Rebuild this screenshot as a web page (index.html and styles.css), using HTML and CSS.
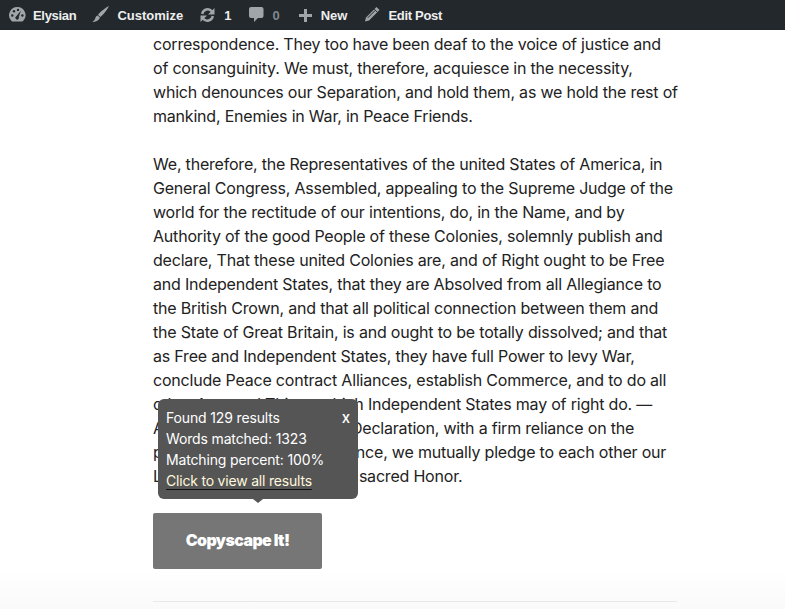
FILE: index.html
```html
<!DOCTYPE html>
<html lang="en">
    <head>
        <meta charset="utf-8">
        <title>Elysian</title>
        <link rel="stylesheet" href="styles.css">
    </head>
    <body>
        <div class="adminbar">
            <a class="bar-item">
                <svg class="icon" viewBox="0 0 20 20">
                    <path d="M9.300 2a8.200 8.200 0 0 0-6 13.800c.3.400.8.600 1.300.600h9.400c.5 0 1-.2 1.300-.6A8.200 8.200 0 0 0 9.300 2z"/>
                    <g class="cut">
                        <circle cx="4.300" cy="10.500" r="1.200"/>
                        <circle cx="6" cy="6.300" r="1.200"/>
                        <circle cx="10" cy="4.900" r="1.200"/>
                        <circle cx="14.400" cy="10.500" r="1.200"/>
                        <path d="M12.800 5.800l-2 6.300a1.800 1.800 0 1 1-2.500-.9z"/>
                    </g>
                </svg>
                <span class="w-site">Elysian</span>
            </a>
            <a class="bar-item">
                <svg class="icon" viewBox="0 0 20 20"><path d="M17 1C13 3 8 7 6 10l2.500 2C11 10 15 5 17 1zM5.500 10.500C3 11.500 3.500 14 2.500 15 2 15.700 1 16.500.5 17c3 0 6.500-1.500 7.500-4.500z"/></svg>
                <span>Customize</span>
            </a>
            <a class="bar-item">
                <svg class="icon" viewBox="0 0 20 20">
                    <path class="ring" d="M3.200 9A5.500 5.500 0 0 1 13 6.500M13.800 11A5.500 5.500 0 0 1 4 13.500"/>
                    <path d="M15.500 3v6.500H9zM1.500 17v-6.500H8z"/>
                </svg>
                <span>1</span>
            </a>
            <a class="bar-item muted">
                <svg class="icon" viewBox="0 0 20 20"><path d="M4 2h10.500a2 2 0 0 1 2 2v7a2 2 0 0 1-2 2H11l-4 4v-4H4a2 2 0 0 1-2-2V4a2 2 0 0 1 2-2z"/></svg>
                <span>0</span>
            </a>
            <a class="bar-item">
                <svg class="icon" viewBox="0 0 20 20"><path d="M8 4h3v5h5v3h-5v5H8v-5H3V9h5z"/></svg>
                <span>New</span>
            </a>
            <a class="bar-item">
                <svg class="icon" viewBox="0 0 20 20">
                    <path d="M13.500 2l3 3L6 15.500l-4 1 1-4z"/>
                    <path class="slit" d="M4.800 12.800l7.400-7.400M11 3.800l3.200 3.200"/>
                </svg>
                <span class="w-edit">Edit Post</span>
            </a>
        </div>

        <div class="content">
            <p>correspondence. They too have been deaf to the voice of justice and<br>
            of consanguinity. We must, therefore, acquiesce in the necessity,<br>
            which denounces our Separation, and hold them, as we hold the rest of<br>
            mankind, Enemies in War, in Peace Friends.</p>

            <p>We, therefore, the Representatives of the united States of America, in<br>
            General Congress, Assembled, appealing to the Supreme Judge of the<br>
            world for the rectitude of our intentions, do, in the Name, and by<br>
            Authority of the good People of these Colonies, solemnly publish and<br>
            declare, That these united Colonies are, and of Right ought to be Free<br>
            and Independent States, that they are Absolved from all Allegiance to<br>
            the British Crown, and that all political connection between them and<br>
            the State of Great Britain, is and ought to be totally dissolved; and that<br>
            as Free and Independent States, they have full Power to levy War,<br>
            conclude Peace contract Alliances, establish Commerce, and to do all<br>
            other Acts and Things which Independent States may of right do. —<br>
            And for the support of this Declaration, with a firm reliance on the<br>
            protection of divine Providence, we mutually pledge to each other our<br>
            Lives, our Fortunes and our sacred Honor.</p>

            <div class="copyscape">
                <button class="copy-btn">Copyscape It!</button>
                <div class="tooltip">
                    <span class="tip-close">x</span>
                    <div>Found 129 results</div>
                    <div>Words matched: 1323</div>
                    <div>Matching percent: 100%</div>
                    <a class="tip-link">Click to view all results</a>
                </div>
            </div>

            <div class="rule"></div>
        </div>
    </body>
</html>
```

FILE: styles.css
```css
*{
    margin:0;
    padding:0;
    box-sizing:border-box;
}
html,body{
    height:609px;
    overflow:hidden;
}
body{
    background:linear-gradient(#fff 570px,#fafafa 609px);
    font-family:"Inter","Liberation Sans",sans-serif;
    color:#222;
}
.adminbar{
    display:flex;
    height:30px;
    padding-left:8px;
    gap:16px;
    align-items:center;
    background:#23282d;
    color:#eee;
    font-family:"Liberation Sans",sans-serif;
    font-size:13px;
    font-weight:bold;
}
.bar-item{
    display:flex;
    align-items:center;
    gap:5px;
}
.bar-item.muted{
    color:#82878c;
}
.w-site,.w-edit{
    letter-spacing:-0.3px;
}
.icon{
    width:20px;
    height:20px;
    fill:#a0a5aa;
}
.icon .cut{
    fill:#23282d;
}
.icon .ring{
    fill:none;
    stroke:#a0a5aa;
    stroke-width:2.4;
}
.icon .slit{
    fill:none;
    stroke:#23282d;
    stroke-width:1;
}
.muted .icon{
    fill:#a0a5aa;
}
.content{
    width:524px;
    margin-left:153px;
    padding-top:2px;
    font-size:16px;
    line-height:24px;
    letter-spacing:-0.2px;
    white-space:nowrap;
}
.content p{
    margin-bottom:24px;
}
.copyscape{
    position:relative;
    margin-top:25px;
}
.copy-btn{
    display:block;
    width:169px;
    height:56px;
    padding-bottom:2px;
    border:0;
    border-radius:2px;
    background:#767676;
    color:#fff;
    font-family:"Inter","Liberation Sans",sans-serif;
    font-size:16px;
    font-weight:900;
    letter-spacing:-0.6px;
}
.tooltip{
    position:absolute;
    left:5px;
    bottom:70px;
    width:200px;
    height:100px;
    padding:8px;
    border-radius:6px;
    background:#555;
    color:#fff;
    font-size:14px;
    line-height:21px;
    letter-spacing:-0.15px;
}
.tooltip::after{
    content:"";
    position:absolute;
    left:95px;
    bottom:-4px;
    border-left:5px solid transparent;
    border-right:5px solid transparent;
    border-top:4px solid #555;
}
.tip-close{
    position:absolute;
    top:8px;
    right:8px;
    font-size:15px;
    font-weight:500;
}
.tip-link{
    color:#fff8dc;
    text-decoration:underline;
    text-decoration-color:#111;
    text-decoration-thickness:1px;
    text-underline-offset:3px;
    letter-spacing:-0.2px;
}
.rule{
    height:1px;
    margin-top:32px;
    background:#e8e8e8;
}
```
